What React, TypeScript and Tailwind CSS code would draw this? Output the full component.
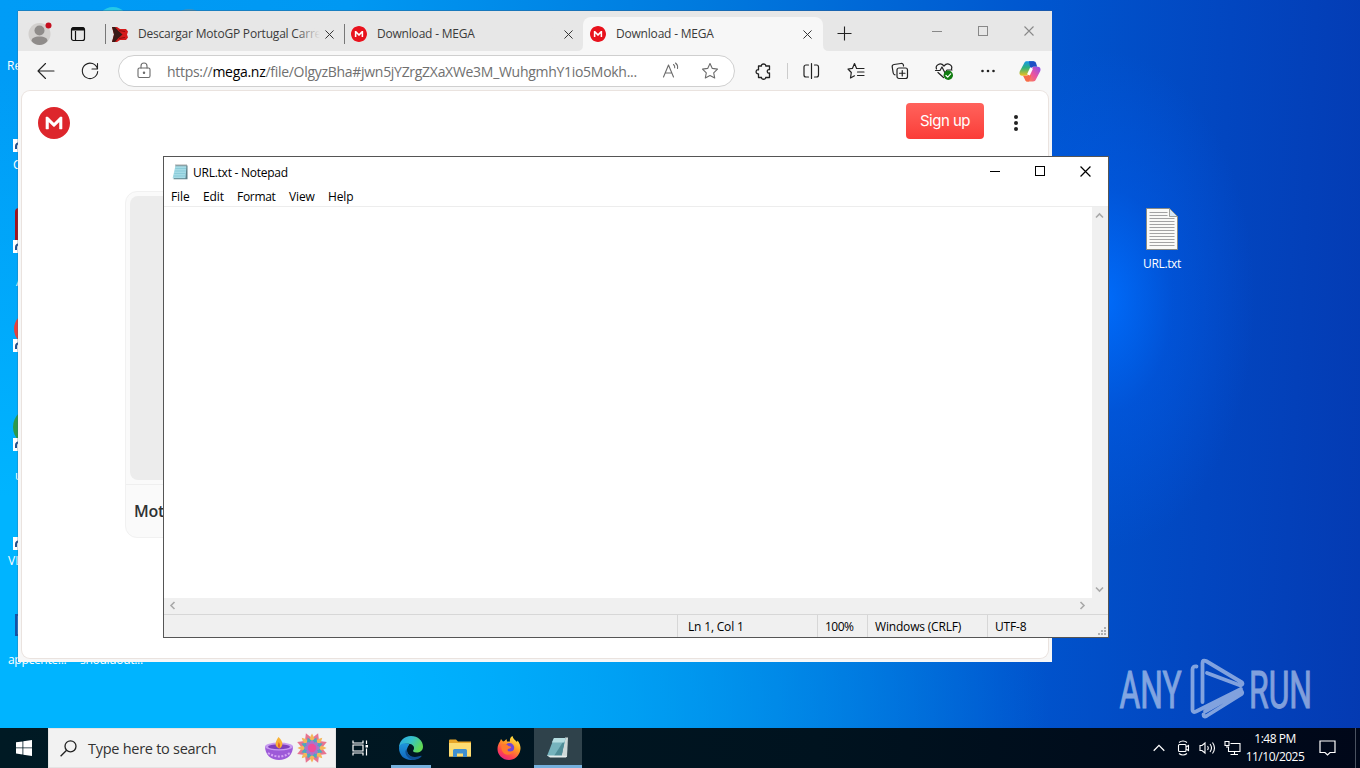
import React from 'react';
import { SiMega } from 'react-icons/si';

const MegaLogo = ({ size, className }: { size: number; className: string }) => (
    <span className="flex shrink-0 rounded-full bg-white">
        <SiMega size={size} className={className} />
    </span>
);

const CloseIcon = ({ size = 9 }: { size?: number }) => (
    <svg width={size} height={size} viewBox="0 0 10 10" stroke="currentColor" strokeWidth="1.1">
        <path d="M.5 .5l9 9M9.5 .5l-9 9" />
    </svg>
);

const icon = {
    width: 20,
    height: 20,
    viewBox: '0 0 20 20',
    fill: 'none',
    stroke: 'currentColor',
    strokeWidth: 1.1,
    strokeLinecap: 'round' as const,
    strokeLinejoin: 'round' as const,
};

const Avatar = () => (
    <svg width="24" height="24" viewBox="0 0 24 24">
        <circle cx="11.500" cy="12" r="11" fill="#d2d0ce" />
        <circle cx="11.500" cy="8.500" r="5" fill="#8f8c8a" />
        <path d="M3.500 19c0-3 3-4.500 8-4.500s8 1.500 8 4.500c-2 2.800-5 4-8 4s-6-1.200-8-4z" fill="#8f8c8a" />
        <circle cx="20.500" cy="3.500" r="3" fill="#c50f1f" />
    </svg>
);

const TorrentIcon = () => (
    <svg width="16" height="15" viewBox="0 0 16 15">
        <path d="M0 0h5l3 2h6l2 2.500-1 3 1 3-2 2.500H8l-3 2H0l2-7.500z" fill="#d41a1a" />
        <path d="M0 0h3l3 3.500L10.500 7.500l-4.500 4L3 15H0l2-7.500z" fill="#3a1a16" />
        <path d="M7 3.500l6 1M7 11.500l6-1" stroke="#8a0f0f" />
    </svg>
);

const Copilot = () => (
    <svg width="22" height="21" viewBox="0 0 22 21">
        <defs>
            <linearGradient id="cpa" x1="0" y1="0" x2="0" y2="1">
                <stop offset="0" stopColor="#1598e8" />
                <stop offset=".45" stopColor="#2eb27c" />
                <stop offset="1" stopColor="#f0c01c" />
            </linearGradient>
            <linearGradient id="cpb" x1="1" y1="0" x2="0" y2="1">
                <stop offset="0" stopColor="#8a4ff0" />
                <stop offset=".5" stopColor="#ea54a0" />
                <stop offset="1" stopColor="#ff8a45" />
            </linearGradient>
        </defs>
        <path d="M5 2.500C5.600.8 6.500.3 8 .3h7L9.500 12.500c-.6 1.600-1.500 2.200-3 2.200H3.500C.8 14.700 0 13 .7 10.500z" fill="url(#cpa)" />
        <path d="M10 .3h4.500c1.500 0 2.300.7 2.700 2.200l1 3.200h-3.500c-2 0-2.600 1-3.200 3z" fill="#1d4fc4" />
        <path d="M17 18.300c-.6 1.700-1.500 2.200-3 2.200H7L12.500 8c.6-1.600 1.500-2.200 3-2.200h3c2.700 0 3.500 1.700 2.800 4.200z" fill="url(#cpb)" />
        <path d="M4 14.700h3c1.800 0 2.600-.8 3.200-2.600L12 15l-2 5.500H8.500c-1.500 0-2.300-.7-2.700-2.200z" fill="#f66b4a" />
        <path d="M12.600 7L9.400 13.800" stroke="#fff" strokeWidth="3" />
    </svg>
);

const NotepadIcon = () => (
    <svg width="16" height="16" viewBox="0 0 16 16">
        <path d="M4 1.500h11.500v13.700H1.500z" fill="#5d7f88" />
        <path d="M3.500 1.500h11L13.500 14.200H.6z" fill="#a5dbe6" />
        <path d="M3.300 4.500h10.700M2.800 7h11M2.200 9.500h11.300M1.600 12H13.300" stroke="#7fc6d3" strokeWidth=".7" />
        <path d="M4 .3v2M6 .3v2M8 .3v2M10 .3v2M12 .3v2M14 .3v2" stroke="#555" strokeWidth=".7" />
    </svg>
);

const Tab = ({ title, children, active, className }: any) => (
    <div className={`flex h-[34px] items-center ${active ? 'relative rounded-t-lg bg-[#f7f7f7]' : ''} ${className}`}>
        {children}
        <div className="relative ml-[10px] w-[182px] overflow-hidden whitespace-nowrap text-[12px] tracking-[-0.2px] text-[#3b3b3b]">
            {title}
            {!active && <span className="absolute right-0 top-0 h-full w-6 bg-gradient-to-r from-transparent to-[#e7e7e7]" />}
        </div>
        <div className="ml-[5px] text-[#333]"><CloseIcon /></div>
        {active && (
            <>
                <svg className="absolute -left-[6px] bottom-0" width="6" height="6" viewBox="0 0 6 6"><path d="M6 0v6H0q6 0 6-6z" fill="#f7f7f7" /></svg>
                <svg className="absolute -right-[6px] bottom-0" width="6" height="6" viewBox="0 0 6 6"><path d="M0 0v6h6Q0 6 0 0z" fill="#f7f7f7" /></svg>
            </>
        )}
    </div>
);

const BrowserWindow = () => (
    <div className="absolute left-[18px] top-[11px] flex h-[651px] w-[1034px] flex-col bg-[#f7f7f7] shadow-[0_-1px_0_rgba(60,90,120,0.4),-1px_0_0_rgba(60,90,120,0.25)]">
        {/* Tab strip */}
        <div className="flex h-[40px] items-end bg-[#e7e7e7]">
            <div className="flex h-[34px] w-[87px] items-center pl-[10px]">
                <Avatar />
                <svg className="ml-[18px]" width="16" height="16" viewBox="0 0 16 16" fill="none" stroke="#111" strokeWidth="1.200">
                    <rect x="1.500" y="1.500" width="13" height="13" rx="2" />
                    <path d="M5.500 5v9.500" />
                    <path d="M2 3h12" strokeWidth="3" />
                </svg>
            </div>
            <div className="flex h-[34px] w-[239px] items-center">
                <div className="h-5 w-px bg-[#777]" />
                <Tab title="Descargar MotoGP Portugal Carre" className="ml-[6px]"><TorrentIcon /></Tab>
            </div>
            <div className="flex h-[34px] w-[239px] items-center">
                <div className="h-5 w-px bg-[#777]" />
                <Tab title="Download - MEGA" className="ml-[6px]"><MegaLogo size={16} className="text-[#e8121d]" /></Tab>
            </div>
            <Tab title="Download - MEGA" active className="w-[240px] pl-[7px]"><MegaLogo size={16} className="text-[#e8121d]" /></Tab>
            <svg className="mb-[10px] ml-[14px]" width="15" height="15" viewBox="0 0 15 15" stroke="#222" strokeWidth="1.100">
                <path d="M7.500 .5v14M.5 7.500h14" />
            </svg>
            <div className="mb-[15px] ml-auto mr-[18px] flex items-center gap-[36px] text-[#888]">
                <div className="h-px w-[10px] bg-[#888]" />
                <div className="h-[10px] w-[10px] border border-[#888]" />
                <CloseIcon size={10} />
            </div>
        </div>

        {/* Address bar */}
        <div className="flex h-[40px] shrink-0 items-center text-[#222]">
            <svg {...icon} className="ml-[18px]"><path d="M2 10h16M9.500 2.500L2 10l7.500 7.500" /></svg>
            <svg {...icon} className="ml-[24px]"><path d="M17.500 8A7.700 7.700 0 1 0 17.700 10.500M17.500 2.500V8H12" /></svg>
            <div className="ml-[18px] flex h-[32px] w-[617px] items-center rounded-full border border-[#cfcfcf] bg-white text-[#6b6b6b]">
                <svg {...icon} className="ml-[15px]">
                    <rect x="4" y="7" width="12" height="9.500" rx="1.500" />
                    <path d="M7 7V5a3 3 0 0 1 6 0v2" />
                    <circle cx="10" cy="11.700" r=".7" fill="currentColor" />
                </svg>
                <div className="ml-[13px] w-[472px] whitespace-nowrap text-[14px] tracking-[-0.29px] text-[#707070]">
                    https://<span className="text-black">mega.nz</span>/file/OlgyzBha#jwn5jYZrgZXaXWe3M_WuhgmhY1io5Mokh...
                </div>
                <svg {...icon} className="ml-[22px]">
                    <path d="M2.500 16L7.500 4l5 12M4.300 12h6.400M12.500 3.500c1 .8 1.400 2 1.200 3.300M14.500 2c1.700 1.300 2.400 3.300 2 5.500" />
                </svg>
                <svg {...icon} className="ml-[19px]">
                    <path d="M10 2.500l2.300 4.900 5.200.7-3.800 3.700 1 5.200L10 14.500l-4.700 2.500 1-5.200L2.500 8.100l5.200-.7z" />
                </svg>
            </div>
            <svg {...icon} className="ml-[18px]" strokeWidth="1.3">
                <path d="M5.500 5h3C7.700 2.300 13.300 2.300 12.700 5H16.500v3.700c-3-.8-3 4 0 3.300V16.500h-3.800c.4 2.300-4.700 2.300-4.200 0h-3v-3.700c-3.200.6-3.200-4.800 0-4z" />
            </svg>
            <div className="ml-[14px] h-4 w-px bg-[#ccc]" />
            <svg {...icon} className="ml-[13px]" strokeWidth="1.2">
                <path d="M7.500 4H5a2 2 0 0 0-2 2v8a2 2 0 0 0 2 2h2.500M10.500 2.500v15M13.500 4h2a2 2 0 0 1 2 2v8a2 2 0 0 1-2 2h-2" />
            </svg>
            <svg {...icon} className="ml-[25px]" strokeWidth="1.2">
                <path d="M10.500 7.300L8.500 2.500 6.500 7.300 2 8l3.300 3.500L4.500 17l4-2.200M10.500 7.500H18M11.500 11H18M11.500 14.500H18" />
            </svg>
            <svg {...icon} className="ml-[24px]" strokeWidth="1.2">
                <rect x="7" y="7" width="10.500" height="10.500" rx="2" />
                <path d="M12.250 9.500v5.500M9.500 12.250h5.500M13.500 5V4.500c-.2-1.500-1-2.200-2.500-2l-7 1c-1.300.3-2 1-1.800 2.300L3.200 12c.2 1 .8 1.600 1.800 1.800" />
            </svg>
            <svg {...icon} className="ml-[24px]" strokeWidth="1.2">
                <path d="M2.500 8C1 4 6.500.8 10 5c3.500-4.200 9-1 7.500 3M4 11.500l5.500 5M1.500 9.500H6l2-3.500 3 6 2-3h5" />
                <circle cx="14.300" cy="14.300" r="4.700" fill="#107c10" stroke="none" />
                <path d="M12 14.500l1.700 1.600 3-3.200" stroke="#fff" />
            </svg>
            <svg {...icon} className="ml-[24px]" fill="currentColor" stroke="none">
                <circle cx="4.500" cy="10" r="1.300" /><circle cx="10" cy="10" r="1.300" /><circle cx="15.500" cy="10" r="1.300" />
            </svg>
            <div className="ml-[21px]"><Copilot /></div>
        </div>

        {/* Page */}
        <div className="mx-[4px] mb-[4px] flex grow flex-col rounded-lg bg-white shadow-[0_0_0_1px_#eae3df]">
            <div className="flex h-[64px] shrink-0 items-center pl-[16px]">
                <MegaLogo size={32} className="text-[#dd262c]" />
                <button className="mb-[4px] ml-auto h-[36px] w-[78px] rounded bg-gradient-to-b from-[#ff625c] to-[#fb3b37] pt-px font-[Inter] text-[15px] tracking-[-0.5px] text-white">
                    Sign up
                </button>
                <svg className="mr-[22px] ml-[22px]" width="20" height="20" viewBox="0 0 20 20" fill="#222">
                    <circle cx="10" cy="4" r="2" /><circle cx="10" cy="10" r="2" /><circle cx="10" cy="16" r="2" />
                </svg>
            </div>
            <div className="ml-[103px] mt-[36px] flex h-[347px] w-[300px] flex-col overflow-hidden rounded-[12px] border border-[#f1f1f1] bg-[#fafafa]">
                <div className="ml-[4px] mt-[4px] h-[284px] rounded-[8px] bg-[#ececec]" />
                <div className="mt-[4px] h-px bg-[#efefef]" />
                <div className="flex grow items-center pl-[8px] text-[16px] font-semibold tracking-[-0.3px] text-[#303233]">Mot</div>
            </div>
        </div>
    </div>
);

const Chevron = ({ className = '' }: { className?: string }) => (
    <svg className={className} width="9" height="9" viewBox="0 0 9 9" fill="none" stroke="#a9a9a9" strokeWidth="1.600">
        <path d="M1 6.500L4.500 3 8 6.500" />
    </svg>
);

const NotepadWindow = () => (
    <div className="absolute left-[163px] top-[156px] flex h-[482px] w-[946px] flex-col border border-[#555] bg-white text-[12px] text-black">
        <div className="flex h-[30px] shrink-0 items-center pl-[8px]">
            <NotepadIcon />
            <span className="ml-[5px] pt-px tracking-[-0.25px]">URL.txt - Notepad</span>
            <div className="mb-[2px] ml-auto mr-[17px] flex items-center gap-[35px]">
                <div className="h-px w-[10px] bg-black" />
                <div className="h-[10px] w-[10px] border border-black" />
                <CloseIcon size={11} />
            </div>
        </div>
        <div className="flex h-[20px] shrink-0 items-center border-b border-[#ededed] pl-[7px] pt-px tracking-[-0.12px]">
            <span className="w-[32px]">File</span>
            <span className="w-[34px]">Edit</span>
            <span className="w-[52px] tracking-[-0.3px]">Format</span>
            <span className="w-[39px]">View</span>
            <span>Help</span>
        </div>
        <div className="flex grow">
            <div className="grow bg-white" />
            <div className="flex w-[16px] flex-col items-center justify-between bg-[#f0f0f0] py-[4px] pr-[2px]">
                <Chevron />
                <Chevron className="rotate-180" />
            </div>
        </div>
        <div className="flex h-[16px] shrink-0 items-center justify-between bg-[#f0f0f0] pb-px pl-[4px] pr-[21px]">
            <Chevron className="-rotate-90" />
            <Chevron className="rotate-90" />
        </div>
        <div className="flex h-[23px] shrink-0 items-stretch border-t border-[#d7d7d7] bg-[#f0f0f0] leading-[23px] tracking-[-0.18px]">
            <div className="w-[513px]" />
            <div className="w-[140px] border-l border-[#d7d7d7] pl-[10px]">Ln 1, Col 1</div>
            <div className="w-[50px] border-l border-[#d7d7d7] pl-[7px] tracking-[-0.5px]">100%</div>
            <div className="w-[120px] border-l border-[#d7d7d7] pl-[7px]">Windows (CRLF)</div>
            <div className="border-l border-[#d7d7d7] pl-[7px]">UTF-8</div>
            <svg className="ml-auto mr-px mt-[12px]" width="9" height="9" viewBox="0 0 9 9" fill="#b0b0b0">
                <path d="M6 0h2v2H6zM3 3h2v2H3zM6 3h2v2H6zM0 6h2v2H0zM3 6h2v2H3zM6 6h2v2H6z" />
            </svg>
        </div>
    </div>
);

const Shortcut = () => (
    <svg width="10" height="13" viewBox="0 0 10 13">
        <path d="M0 0h10v13H0z" fill="#fff" />
        <path d="M3 10V7q0-3 5-3" fill="none" stroke="#25508c" strokeWidth="2" />
    </svg>
);

const DesktopIcons = () => (
    <div className="absolute inset-0 text-[12px] leading-4 text-white">
        <div className="absolute left-[97px] top-[7px] h-10 w-[32px] rounded-full bg-[#24c8e8]" />
        <div className="absolute left-[172px] top-[9px] h-10 w-[34px] rounded-full bg-[#3d91bf]" />
        <span className="absolute left-[7px] top-[58px]">Re</span>
        <div className="absolute left-[13px] top-[139px]"><Shortcut /></div>
        <span className="absolute left-[13px] top-[157px]">C</span>
        <div className="absolute left-[15px] top-[208px] h-10 w-10 rounded bg-[#a3121a]" />
        <div className="absolute left-[13px] top-[240px]"><Shortcut /></div>
        <span className="absolute left-[16px] top-[274px]">A</span>
        <div className="absolute left-[14px] top-[312px] h-[34px] w-[34px] rounded-full bg-[#e8413a]" />
        <div className="absolute left-[13px] top-[339px]"><Shortcut /></div>
        <div className="absolute left-[13px] top-[408px] h-[38px] w-[38px] rounded-full bg-[#2d9a4b]" />
        <div className="absolute left-[13px] top-[438px]"><Shortcut /></div>
        <span className="absolute left-[15px] top-[468px]">u</span>
        <div className="absolute left-[13px] top-[537px]"><Shortcut /></div>
        <span className="absolute left-[8px] top-[553px]">VL</span>
        <div className="absolute left-[15px] top-[614px] h-[22px] w-8 border-2 border-[#1552a5] bg-[#2474c8]" />
        <span className="absolute left-[8px] top-[652px] tracking-[-0.3px]">appcente...</span>
        <span className="absolute left-[80px] top-[652px] tracking-[-0.3px]">shouldout...</span>
        <div className="absolute left-[1126px] top-[208px] flex w-[72px] flex-col items-center">
            <svg width="32" height="42" viewBox="0 0 32 42">
                <path d="M.5 .5h23l8 8v33H.5z" fill="#fafaf7" stroke="#8c8c84" />
                <path d="M23.500 .5v8h8z" fill="#d5e6f5" stroke="#8c8c84" strokeWidth=".8" />
                <path d="M3.500 4.500h18M3.500 7.500h18M3.500 10.500h25M3.500 13.500h25M3.500 16.500h25M3.500 19.500h25M3.500 22.500h25M3.500 25.500h25M3.500 28.500h25M3.500 31.500h25M3.500 34.500h25M3.500 37.500h25" stroke="#a3a3a3" />
            </svg>
            <span className="mt-[6px] tracking-[-0.35px]">URL.txt</span>
        </div>
    </div>
);

const Watermark = () => (
    <svg className="absolute left-[1110px] top-[650px]" width="230" height="76" viewBox="0 0 230 76" fill="#fff" opacity=".5">
        <g fontFamily="Roboto" fontSize="52" stroke="#fff" strokeWidth="1">
            <text x="9.500" y="57.500" textLength="62" lengthAdjust="spacingAndGlyphs">ANY</text>
            <text x="139" y="57.500" textLength="63" lengthAdjust="spacingAndGlyphs">RUN</text>
        </g>
        <path
            d="M86.500 16.500q-4-.500-4 3V60q0 3 3.500 1.500l45-22.500M92.500 52V13q0-3.500 3.500-2l36 21.500q1.500 2-1.500 3L97 23M95 61.500L131 41q2.500 1.500 0 3.500L96.500 66q-3 1.500-3-1.500"
            fill="none"
            stroke="#fff"
            strokeWidth="3.800"
            strokeLinejoin="round"
            strokeLinecap="round"
        />
    </svg>
);

const Diya = () => (
    <svg width="28" height="24" viewBox="0 0 28 24">
        <path d="M0 9h28c0 9-6 14-14 14S0 18 0 9z" fill="#9d5ad8" />
        <ellipse cx="14" cy="9.500" rx="14" ry="4" fill="#c89bf0" />
        <ellipse cx="14" cy="9.800" rx="11" ry="2.500" fill="#7d3fbb" />
        <path d="M13.500 0c5 5 5 9 1 11.500-5-1.500-5-6-1-11.500z" fill="#f9b233" />
        <path d="M13.800 5c1.600 3 1.300 5 .3 6.200-1.500-1.200-1.300-3.500-.3-6.200z" fill="#e25a2c" />
        <path d="M3 16q11 7 22 0" stroke="#d6a5f5" strokeWidth="2" strokeDasharray="2 1.500" fill="none" />
    </svg>
);

const petals = [0, 45, 90, 135, 180, 225, 270, 315];

const Rangoli = () => (
    <svg width="32" height="32" viewBox="-16 -16 32 32">
        {petals.map(a => <path key={a} transform={`rotate(${a + 22.5})`} d="M0-16L4.500-8H-4.500z" fill="#e8748f" />)}
        {petals.map(a => <path key={a} transform={`rotate(${a})`} d="M0-14.500Q3-10 2-5h-4Q-3-10 0-14.500z" fill="#f4b75a" />)}
        {petals.map(a => <path key={a} transform={`rotate(${a + 22.5})`} d="M0-11.500L4.500-3.500h-9z" fill="#4ba9bd" />)}
        {petals.map(a => <ellipse key={a} transform={`rotate(${a})`} cx="0" cy="-4.500" rx="2.200" ry="3" fill="#a974cc" />)}
        <circle r="4.200" fill="#ee4d9b" />
    </svg>
);

const EdgeIcon = () => (
    <svg width="24" height="24" viewBox="0 0 24 24">
        <defs>
            <linearGradient id="edgeTop" x1="0" y1="0" x2="1" y2=".5">
                <stop offset="0" stopColor="#2aa6e4" />
                <stop offset=".5" stopColor="#35c1cc" />
                <stop offset="1" stopColor="#61d954" />
            </linearGradient>
            <linearGradient id="edgeLow" x1="0" y1="0" x2="0" y2="1">
                <stop offset="0" stopColor="#1f96dc" />
                <stop offset="1" stopColor="#1166bd" />
            </linearGradient>
        </defs>
        <path d="M0 12C0 5 5 0 12 0c7 0 12 5 12 10.500 0 4-3 6-6.500 6-3 0-4-1.200-3.200-2.300 1.700-2 .5-5.700-3.300-6.200C6 7 1 8.500 0 12z" fill="url(#edgeTop)" />
        <path d="M0 12c.8-4.500 6-5.500 9.500-4C12 8 8 10 8 14c0 5 5 8 9.500 7.500 2-.3 3.500-.9 4-.7C19.500 22.500 16 24 12 24 5 24 0 19 0 12z" fill="url(#edgeLow)" />
        <path d="M8 13c-1 6 5 10 14 6.800.6-.2.8.3.4.8-2 2.300-5.400 3.600-9 3.300C7 22 4.500 15 8 13z" fill="#0f4f94" />
    </svg>
);

const ExplorerIcon = () => (
    <svg width="22" height="19" viewBox="0 0 22 19">
        <path d="M0 1.500Q0 .5 1 .5h6l2 2h13v15H0z" fill="#e8a628" />
        <path d="M0 4h22v13.500H0z" fill="#fddc72" />
        <path d="M4 18v-6.500q0-1.500 1.500-1.500h11q1.500 0 1.500 1.500V18h-4v-3.500H8V18z" fill="#3f8fd0" />
    </svg>
);

const FirefoxIcon = () => (
    <svg width="24" height="24" viewBox="0 0 24 24">
        <defs>
            <linearGradient id="fox" x1=".8" y1="0" x2=".2" y2="1">
                <stop offset="0" stopColor="#fff04a" />
                <stop offset=".4" stopColor="#ff9a23" />
                <stop offset=".75" stopColor="#ff4052" />
                <stop offset="1" stopColor="#e0228a" />
            </linearGradient>
        </defs>
        <path d="M3 5.500L4 3l2 2.500 1.500-.500L9.500 3l.5 2.500h3C12.500 3.500 13.500 1 15.500 0c.5 3 3 4 4.500 6l.5-1.500C23 7.500 24 11 23.300 14 22.300 20 17.500 24 12 24 5.500 24 .5 19 .5 13 .5 10 1.500 7.500 3 5.500z" fill="url(#fox)" />
        <circle cx="12.500" cy="11.800" r="4.700" fill="#7146d6" />
        <path d="M4.500 8.500c3-1 5.500 0 7 1.500 2 .3 3 .8 2.500 1.500-1 1.500-3 1-3.500 2.500.5 2 4 2 6 .5-1 4-6 5.500-9.500 3C4.500 15.500 4 12 4.500 8.500z" fill="#ff7a2c" />
    </svg>
);

const Taskbar = () => (
    <div className="absolute bottom-0 left-0 flex h-[40px] w-full items-center bg-gradient-to-r from-[#001a24] via-[#00131f] via-60% to-[#000719]">
        <div className="flex w-[48px] justify-center">
            <svg width="16" height="16" viewBox="0 0 16 16" fill="#fff">
                <path d="M0 2.300l6.500-.9v6.100H0zM7.300 1.300L16 0v7.500H7.300zM0 8.300h6.500v6.200L0 13.600zM7.300 8.300H16V16l-8.700-1.300z" />
            </svg>
        </div>
        <div className="flex h-full w-[288px] items-center border border-[#e4e4e4] bg-[#f2f2f2] pl-[11px] text-[#333]">
            <svg width="17" height="17" viewBox="0 0 17 17" fill="none" stroke="#222" strokeWidth="1.300">
                <circle cx="10.500" cy="6.300" r="5.500" /><path d="M6.600 10.300L.6 16.300" />
            </svg>
            <span className="ml-[11px] w-[176px] whitespace-nowrap pt-px text-[14.500px] tracking-[-0.27px]">Type here to search</span>
            <div className="ml-px mt-[2px]"><Diya /></div>
            <div className="ml-[3px]"><Rangoli /></div>
        </div>
        <div className="flex w-[48px] justify-center">
            <svg width="17" height="16" viewBox="0 0 17 16" fill="none" stroke="#fff" strokeWidth="1.200">
                <path d="M1 .5v2.500h10V.5M1 15.500V13h10v2.500M1 5h10v6H1zM14.500 .5V4M14.500 8.500v7" />
                <path d="M13.500 5h2.500v2.500h-2.500z" fill="#fff" stroke="none" />
            </svg>
        </div>
        <div className="ml-[2px] flex h-full w-[50px] flex-col items-center pt-[8px]">
            <EdgeIcon />
            <div className="mt-auto h-[3px] w-[40px] bg-[#76b0dd]" />
        </div>
        <div className="flex w-[48px] justify-center"><ExplorerIcon /></div>
        <div className="flex w-[50px] justify-center"><FirefoxIcon /></div>
        <div className="flex h-full w-[48px] flex-col items-center bg-[#2f424b] pt-[9px]">
            <svg width="24" height="22" viewBox="0 0 24 22">
                <path d="M19 .5h3L21 20l-5.500-.500z" fill="#cfd9d9" />
                <path d="M8 1h11.500l-4 18H1z" fill="#76b3bd" />
                <path d="M19.500 1l-4 18H8z" fill="#4f8d98" />
                <path d="M1 18.500h14.500L21 19l-1 1.500H4z" fill="#e6eded" />
                <path d="M8 1h11.500l-1 4.500H5.800z" fill="#b5dde1" />
            </svg>
            <div className="mt-auto h-[3px] w-full bg-[#76b0dd]" />
        </div>

        {/* Tray */}
        <div className="ml-auto flex h-full items-center text-white">
            <svg width="12" height="8" viewBox="0 0 12 8" fill="none" stroke="#fff" strokeWidth="1.300"><path d="M.7 6.700L6 1.400l5.300 5.300" /></svg>
            <svg className="ml-[12px]" width="14" height="16" viewBox="0 0 14 16" fill="none" stroke="#fff" strokeWidth="1.100">
                <rect x="1.500" y="4.500" width="7.500" height="7" rx="1" />
                <path d="M9 7l2.500-1.500v5L9 9M2 2.500Q6 -.5 10 2.500M2 13.500Q6 16.500 10 13.500" />
            </svg>
            <svg className="ml-[8px]" width="18" height="16" viewBox="0 0 18 16" fill="none" stroke="#fff" strokeWidth="1.100">
                <path d="M1 5.500h2L6 3v10L3 10.500H1zM8.500 6q1.500 2 0 4M11 4q3 4 0 8M13.500 2.500q4 5.500 0 11" />
            </svg>
            <svg className="ml-[7px]" width="17" height="16" viewBox="0 0 17 16" fill="none" stroke="#fff" strokeWidth="1.100">
                <path d="M6.500 3.500h9.500v8H4.500v-5M10.500 11.500v3M6.500 14.500h7.500M1 1.500h4v4H1zM3 5.500V8" />
            </svg>
            <div className="ml-[4px] flex w-[60px] flex-col items-center whitespace-nowrap text-[12px] leading-[18px] tracking-[-0.5px]">
                <span>1:48 PM</span>
                <span>11/10/2025</span>
            </div>
            <svg className="ml-[14px]" width="17" height="16" viewBox="0 0 17 16" fill="none" stroke="#fff" strokeWidth="1.200">
                <path d="M1 1h15v11.500h-5L8.500 15 6 12.500H1z" />
            </svg>
            <div className="ml-[19px] mr-[4px] h-full w-px bg-[#4a5260]" />
        </div>
    </div>
);

export default function App() {
    return (
        <div className="relative h-[768px] w-[1360px] overflow-hidden bg-[radial-gradient(ellipse_150px_250px_at_1105px_300px,rgba(0,110,255,0.9),rgba(0,95,240,0.4)_45%,transparent),radial-gradient(ellipse_1050px_640px_at_0px_720px,#00b4ff_35%,transparent),linear-gradient(93deg,#009cf6_0%,#0098f2_25%,#007ade_50%,#0056cf_74%,#0246c0_88%,#043ab2_100%)] font-['Open_Sans','Noto_Sans',sans-serif]">
            <DesktopIcons />
            <BrowserWindow />
            <NotepadWindow />
            <Watermark />
            <Taskbar />
        </div>
    );
}
